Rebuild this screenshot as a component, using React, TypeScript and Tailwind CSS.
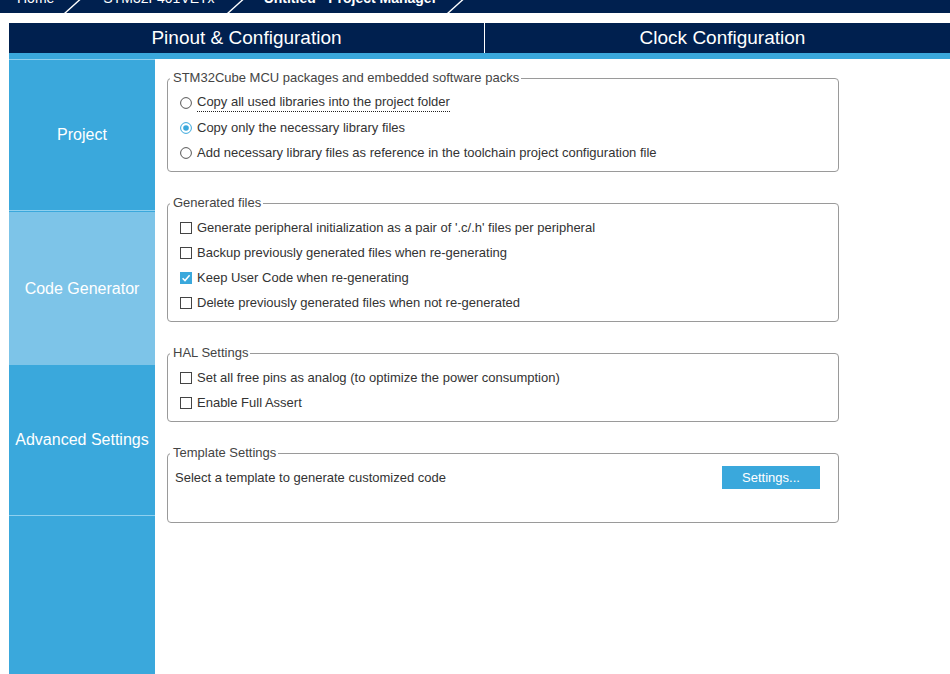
import React from "react";

const NAVY = "bg-[#00204f]";

function Slash() {
    return (
        <svg width="17" height="13" viewBox="0 0 17 13" className="shrink-0 block">
            <line x1="0.5" y1="13.5" x2="16" y2="-0.5" stroke="#ffffff" strokeWidth="1.4" />
        </svg>
    );
}

function TopBar() {
    return (
        <div className={`h-[13px] overflow-hidden ${NAVY}`}>
            <div className="flex flex-row items-start h-[13px] text-white text-[14px] leading-[16px]">
                <span className="ml-[17px] -mt-[10px]">Home</span>
                <span className="ml-[10px]"><Slash /></span>
                <span className="ml-[22px] -mt-[10px]">STM32F401VETx</span>
                <span className="ml-[12px]"><Slash /></span>
                <span className="ml-[20px] -mt-[10px] font-bold">Untitled - Project Manager</span>
                <span className="ml-[10px]"><Slash /></span>
            </div>
        </div>
    );
}

function Radio({ checked }: { checked?: boolean }) {
    return (
        <svg width="12" height="12" viewBox="0 0 12 12" className="shrink-0">
            <circle cx="6" cy="6" r="5.4" fill="#fff" stroke={checked ? "#3aa8dc" : "#555"} strokeWidth="1" />
            {checked && <circle cx="6" cy="6" r="2.8" fill="#3aa8dc" />}
        </svg>
    );
}

function Check({ checked }: { checked?: boolean }) {
    return (
        <svg width="12" height="12" viewBox="0 0 12 12" className="shrink-0">
            {checked ? (
                <>
                    <rect x="0" y="0" width="12" height="12" fill="#3aa8dc" />
                    <path d="M2.6 6.2 L5 8.6 L9.6 3.2" fill="none" stroke="#fff" strokeWidth="1.5" />
                </>
            ) : (
                <rect x="0.5" y="0.5" width="11" height="11" fill="#fff" stroke="#444" strokeWidth="1" />
            )}
        </svg>
    );
}

function Row({ control, children }: { control: React.ReactNode; children: React.ReactNode }) {
    return (
        <div className="h-[25px] flex flex-row items-center gap-[5px] pl-[12px]">
            {control}
            <span>{children}</span>
        </div>
    );
}

function Group({ title, children, className }: { title: string; children: React.ReactNode; className?: string }) {
    return (
        <fieldset className={`w-[672px] border border-[#9a9a9a] rounded-[4px] px-0 pt-[4px] pb-[6px] m-0 ${className ?? ""}`}>
            <legend className="ml-[2px] pl-[3px] pr-[2px] text-[13px] leading-[16px] text-[#444]">{title}</legend>
            {children}
        </fieldset>
    );
}

function SideItem({ label, active, className }: { label: string; active?: boolean; className?: string }) {
    return (
        <div className={`flex items-center justify-center text-white text-[16px] ${active ? "bg-[#7dc4e8]" : ""} ${className ?? ""}`}>
            {label}
        </div>
    );
}

export default function App() {
    return (
        <div className="w-[950px] h-[674px] overflow-hidden bg-white font-['Liberation_Sans',Arial,sans-serif]">
            <TopBar />
            <div className="h-[10px]" />
            <div className="ml-[9px] w-[951px] flex flex-col">
                <div className={`h-[30px] flex flex-row text-white text-[19px] ${NAVY}`}>
                    <div className="w-[475px] flex items-center justify-center">Pinout &amp; Configuration</div>
                    <div className="w-[476px] flex items-center justify-center border-l border-white">Clock Configuration</div>
                </div>
                <div className="h-[6px] bg-[#3aa8dc]" />
                <div className="flex flex-row h-[620px]">
                    <div className="w-[146px] bg-[#3aa8dc] flex flex-col">
                        <SideItem label="Project" className="h-[152px] border-t border-b border-[#8fd0ef] mb-px" />
                        <SideItem label="Code Generator" active className="h-[153px]" />
                        <SideItem label="Advanced Settings" className="h-[151px] border-b border-[#8fd0ef]" />
                    </div>
                    <div className="flex-1 pl-[12px] pt-[11px] text-[13px] text-[#333] leading-[16px]">
                        <Group title="STM32Cube MCU packages and embedded software packs">
                            <Row control={<Radio />}>
                                <span className="inline-block border-b border-dotted border-[#222] leading-[16px] pb-[1px]">Copy all used libraries into the project folder</span>
                            </Row>
                            <Row control={<Radio checked />}>Copy only the necessary library files</Row>
                            <Row control={<Radio />}>Add necessary library files as reference in the toolchain project configuration file</Row>
                        </Group>
                        <Group title="Generated files" className="mt-[23px]">
                            <Row control={<Check />}>Generate peripheral initialization as a pair of '.c/.h' files per peripheral</Row>
                            <Row control={<Check />}>Backup previously generated files when re-generating</Row>
                            <Row control={<Check checked />}>Keep User Code when re-generating</Row>
                            <Row control={<Check />}>Delete previously generated files when not re-generated</Row>
                        </Group>
                        <Group title="HAL Settings" className="mt-[23px]">
                            <Row control={<Check />}>Set all free pins as analog (to optimize the power consumption)</Row>
                            <Row control={<Check />}>Enable Full Assert</Row>
                        </Group>
                        <Group title="Template Settings" className="mt-[23px] pt-[3px] pb-[32px]">
                            <div className="h-[25px] flex flex-row items-center pl-[7px]">
                                <span className="flex-1">Select a template to generate customized code</span>
                                <button className="w-[98px] h-[23px] mr-[18px] bg-[#3aa8dc] text-white text-[13px]">Settings...</button>
                            </div>
                        </Group>
                    </div>
                </div>
            </div>
        </div>
    );
}
